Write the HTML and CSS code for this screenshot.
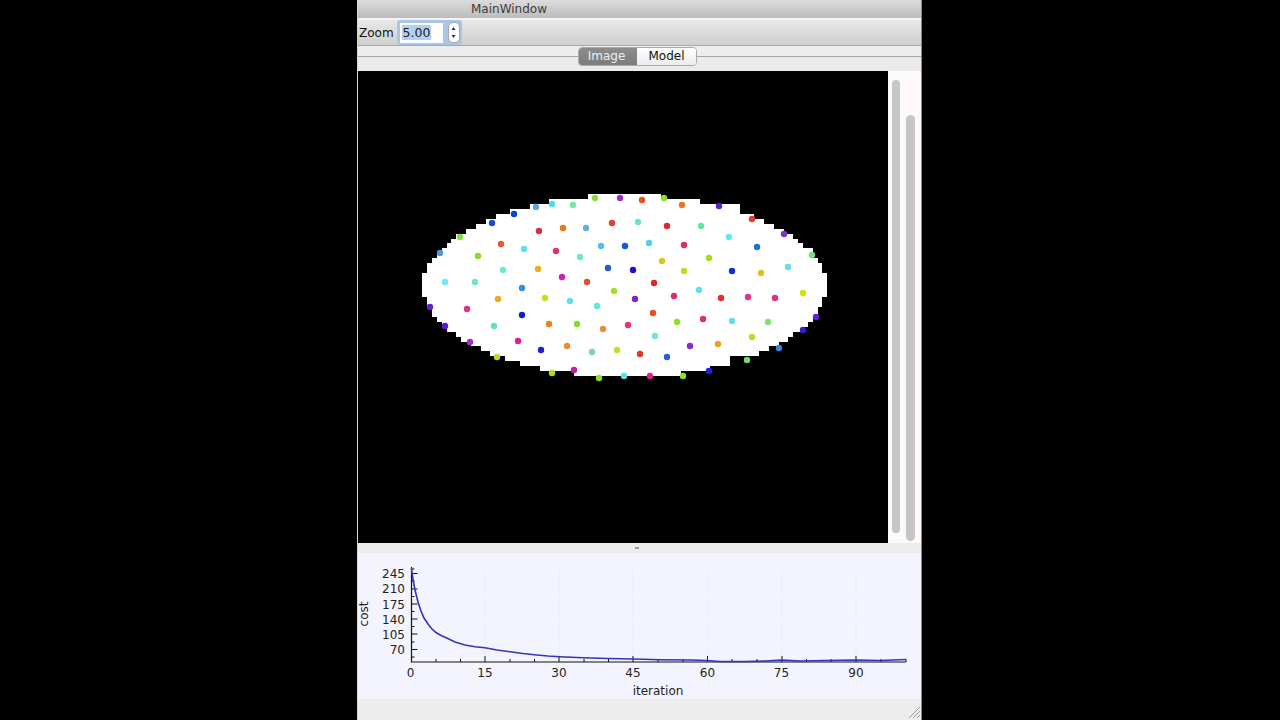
FILE: index.html
```html
<!DOCTYPE html>
<html lang="en">
<head>
<meta charset="utf-8">
<title>MainWindow</title>
<link rel="stylesheet" href="styles.css">
</head>
<body>
<div class="window">
  <div class="titlebar">MainWindow</div>
  <div class="toolbar">
    <span class="zoom-label">Zoom</span>
    <div class="spin">
      <div class="spin-input"><span class="spin-value">5.00</span></div>
      <div class="stepper">
        <svg width="7" height="15" viewBox="0 0 7 15"><path d="M3.5 2 5.500 5h-4zM3.500 13 1.500 10h4z" fill="#333"/></svg>
      </div>
    </div>
  </div>
  <div class="tabstrip">
    <div class="segments">
      <div class="seg seg-on">Image</div>
      <div class="seg">Model</div>
    </div>
  </div>
  <div class="pane">
    <div class="view">
      <svg class="image" viewBox="358 71 530 472" width="530" height="472">
        <rect x="358" y="71" width="530" height="472" fill="#000"/>
        <polygon fill="#fff" points="588,194 661,194 661,199 700,199 700,204 740,204 740,214 754,214 754,219 764,219 764,224 774,224 774,229 784,229 784,234 793,234 793,239 798,239 798,243 803,243 803,248 813,248 813,258 818,258 818,263 822,263 822,273 827,273 827,297 822,297 822,307 818,307 818,317 813,317 813,322 808,322 808,327 803,327 803,332 793,332 793,337 788,337 788,342 779,342 779,346 769,346 769,351 759,351 759,356 730,356 730,366 710,366 710,371 681,371 681,376 574,376 574,371 540,371 540,366 520,366 520,361 505,361 505,356 490,356 490,351 481,351 481,346 471,346 471,342 461,342 461,337 456,337 456,332 447,332 447,327 442,327 442,322 437,322 437,317 432,317 432,307 427,307 427,297 422,297 422,273 427,273 427,263 432,263 432,258 437,258 437,253 442,253 442,248 447,248 447,243 451,243 451,239 456,239 456,234 466,234 466,229 476,229 476,224 486,224 486,219 496,219 496,214 510,214 510,209 530,209 530,204 549,204 549,199 588,199"/>
        <g class="dots">
          <circle cx="595" cy="198" r="3.2" fill="#8ade3c"/><circle cx="620" cy="198" r="3.2" fill="#9a2fd0"/><circle cx="536" cy="207" r="3.2" fill="#5aa8d8"/><circle cx="552" cy="204" r="3.2" fill="#55d8e8"/><circle cx="573" cy="205" r="3.2" fill="#70e8b0"/><circle cx="612" cy="223" r="3.2" fill="#e04030"/><circle cx="514" cy="214" r="3.2" fill="#1040d0"/><circle cx="492" cy="223" r="3.2" fill="#1050d0"/><circle cx="539" cy="231" r="3.2" fill="#d03050"/><circle cx="563" cy="228" r="3.2" fill="#e87818"/><circle cx="586" cy="228" r="3.2" fill="#60b0e0"/><circle cx="460" cy="237" r="3.2" fill="#80e040"/><circle cx="501" cy="244" r="3.2" fill="#e85830"/><circle cx="524" cy="249" r="3.2" fill="#60e0e8"/><circle cx="556" cy="251" r="3.2" fill="#e0307a"/><circle cx="601" cy="246" r="3.2" fill="#50c0e0"/><circle cx="625" cy="246" r="3.2" fill="#1858d0"/><circle cx="440" cy="253" r="3.2" fill="#5098d0"/><circle cx="478" cy="256" r="3.2" fill="#90d830"/><circle cx="580" cy="257" r="3.2" fill="#70e8c8"/><circle cx="608" cy="268" r="3.2" fill="#1860d0"/><circle cx="503" cy="270" r="3.2" fill="#70e8d0"/><circle cx="538" cy="269" r="3.2" fill="#e8b020"/><circle cx="562" cy="277" r="3.2" fill="#d020a8"/><circle cx="445" cy="282" r="3.2" fill="#70e8f0"/><circle cx="475" cy="282" r="3.2" fill="#70e8c0"/><circle cx="587" cy="282" r="3.2" fill="#e05030"/>
          <circle cx="642" cy="200" r="3.2" fill="#e85020"/><circle cx="664" cy="198" r="3.2" fill="#90e020"/><circle cx="682" cy="205" r="3.2" fill="#e87828"/><circle cx="719" cy="206" r="3.2" fill="#6020d0"/><circle cx="638" cy="222" r="3.2" fill="#60e8d0"/><circle cx="667" cy="226" r="3.2" fill="#e02830"/><circle cx="701" cy="226" r="3.2" fill="#60e8a0"/><circle cx="752" cy="219" r="3.2" fill="#e04028"/><circle cx="729" cy="237" r="3.2" fill="#60e8f0"/><circle cx="784" cy="234" r="3.2" fill="#8030d0"/><circle cx="649" cy="243" r="3.2" fill="#50d0e8"/><circle cx="684" cy="245" r="3.2" fill="#d83060"/><circle cx="757" cy="247" r="3.2" fill="#2070d8"/><circle cx="812" cy="255" r="3.2" fill="#70e080"/><circle cx="709" cy="258" r="3.2" fill="#a0e010"/><circle cx="662" cy="261" r="3.2" fill="#d8c818"/><circle cx="788" cy="267" r="3.2" fill="#60e0e8"/><circle cx="633" cy="270" r="3.2" fill="#2010d0"/><circle cx="684" cy="271" r="3.2" fill="#b8e020"/><circle cx="732" cy="271" r="3.2" fill="#1030d0"/><circle cx="761" cy="273" r="3.2" fill="#e0c020"/><circle cx="654" cy="283" r="3.2" fill="#e02820"/>
          <circle cx="522" cy="288" r="3.2" fill="#3090e0"/><circle cx="614" cy="291" r="3.2" fill="#a0e030"/><circle cx="545" cy="298" r="3.2" fill="#c0e020"/><circle cx="498" cy="299" r="3.2" fill="#e8b020"/><circle cx="570" cy="301" r="3.2" fill="#60e0e0"/><circle cx="597" cy="306" r="3.2" fill="#60e8e0"/><circle cx="430" cy="307" r="3.2" fill="#6020d8"/><circle cx="467" cy="309" r="3.2" fill="#e03090"/><circle cx="522" cy="315" r="3.2" fill="#1020d0"/><circle cx="445" cy="326" r="3.2" fill="#6018d0"/><circle cx="494" cy="326" r="3.2" fill="#60e0c0"/><circle cx="549" cy="324" r="3.2" fill="#e88020"/><circle cx="577" cy="324" r="3.2" fill="#80e020"/><circle cx="603" cy="329" r="3.2" fill="#e89030"/><circle cx="470" cy="342" r="3.2" fill="#a030c0"/><circle cx="518" cy="341" r="3.2" fill="#d82090"/><circle cx="541" cy="350" r="3.2" fill="#2020d0"/><circle cx="567" cy="346" r="3.2" fill="#e89030"/><circle cx="592" cy="352" r="3.2" fill="#80d8a0"/><circle cx="617" cy="350" r="3.2" fill="#b8e030"/><circle cx="497" cy="357" r="3.2" fill="#c0d820"/><circle cx="552" cy="373" r="3.2" fill="#b0e020"/><circle cx="574" cy="370" r="3.2" fill="#c020a0"/><circle cx="599" cy="378" r="3.2" fill="#90e020"/><circle cx="624" cy="376" r="3.2" fill="#60e0e0"/>
          <circle cx="699" cy="290" r="3.2" fill="#60e0e8"/><circle cx="803" cy="293" r="3.2" fill="#d0e010"/><circle cx="674" cy="296" r="3.2" fill="#e03060"/><circle cx="721" cy="298" r="3.2" fill="#e03020"/><circle cx="748" cy="297" r="3.2" fill="#e03090"/><circle cx="775" cy="298" r="3.2" fill="#e03080"/><circle cx="635" cy="299" r="3.2" fill="#8020d0"/><circle cx="653" cy="313" r="3.2" fill="#e05020"/><circle cx="628" cy="325" r="3.2" fill="#e83080"/><circle cx="677" cy="322" r="3.2" fill="#90e020"/><circle cx="703" cy="319" r="3.2" fill="#d83070"/><circle cx="732" cy="321" r="3.2" fill="#60e0e8"/><circle cx="768" cy="322" r="3.2" fill="#80e080"/><circle cx="816" cy="317" r="3.2" fill="#6020d0"/><circle cx="803" cy="330" r="3.2" fill="#3020d0"/><circle cx="655" cy="336" r="3.2" fill="#70e0e0"/><circle cx="752" cy="337" r="3.2" fill="#b0e030"/><circle cx="690" cy="346" r="3.2" fill="#8030d0"/><circle cx="718" cy="344" r="3.2" fill="#f0a020"/><circle cx="779" cy="348" r="3.2" fill="#4080e0"/><circle cx="640" cy="354" r="3.2" fill="#e03830"/><circle cx="667" cy="357" r="3.2" fill="#2060d0"/><circle cx="747" cy="360" r="3.2" fill="#70e060"/><circle cx="709" cy="371" r="3.2" fill="#2020e0"/><circle cx="650" cy="376" r="3.2" fill="#e02090"/><circle cx="683" cy="376" r="3.2" fill="#90e030"/>
        </g>
      </svg>
      <div class="scroll scroll-a"><div class="thumb thumb-a"></div></div>
      <div class="scroll scroll-b"><div class="thumb thumb-b"></div></div>
    </div>
  </div>
  <div class="splitter"><span class="handle"></span></div>
  <svg class="plot" viewBox="358 553 563 146" width="563" height="146">
    <g class="grid">
      <path d="M485 570V660M559 570V660M633 570V660M707.5 570V660M782 570V660M856 570V660"/>
    </g>
    <path class="axis" d="M411.500 567V662H906"/>
    <path class="tick" d="M411.500 573.500h6M411.500 589h6M411.500 604h6M411.500 619h6M411.500 634h6M411.500 649.500h6M411.500 581h3M411.500 596.500h3M411.500 611.500h3M411.500 626.500h3M411.500 642h3M411.500 657h3M411.500 569h3"/>
    <path class="tick" d="M485 662v-6M559 662v-6M633 662v-6M707.500 662v-6M782 662v-6M856 662v-6M906 662v-3M436 662v-3M460.500 662v-3M510 662v-3M534.500 662v-3M584 662v-3M608.500 662v-3M658 662v-3M683 662v-3M732 662v-3M757 662v-3M806.500 662v-3M831 662v-3M881 662v-3"/>
    <polyline class="curve" points="411.500,568 412,573 413.500,582 415,590 418,602 421,611 424,618 428,624 432,629 436,632.500 441,635.500 446.700,638 455,642 465,645 475,646.700 485,647.700 497,650 510,651.700 523,653.500 536.700,655 548,656 560,656.700 583,657.700 608,658.500 633,659 660,659.700 690,660 707,660.500 720,661.500 745,661.500 765,661 782,660 800,661 825,660.500 856,660 880,660.500 906,659.500"/>
    <g class="ylabels">
      <text x="405" y="578">245</text>
      <text x="405" y="593">210</text>
      <text x="405" y="608.500">175</text>
      <text x="405" y="623.500">140</text>
      <text x="405" y="639">105</text>
      <text x="405" y="654">70</text>
    </g>
    <g class="xlabels">
      <text x="410.500" y="677">0</text>
      <text x="485" y="677">15</text>
      <text x="559" y="677">30</text>
      <text x="633" y="677">45</text>
      <text x="707.500" y="677">60</text>
      <text x="781.500" y="677">75</text>
      <text x="856" y="677">90</text>
    </g>
    <text class="xtitle" x="658" y="695">iteration</text>
    <text class="ytitle" transform="translate(368 614) rotate(-90)">cost</text>
  </svg>
  <div class="status">
    <svg class="grip" width="13" height="13" viewBox="0 0 13 13"><path d="M1 12 12 1M5 12l7-7M9 12l3-3" stroke="#9a9a9a" fill="none"/></svg>
  </div>
</div>
</body>
</html>
```

FILE: styles.css
```css
* { box-sizing: border-box; }
html, body { margin: 0; height: 100%; }
body {
  background: #000;
  padding-left: 357px;
  overflow: hidden;
  font-family: "DejaVu Sans", "Liberation Sans", sans-serif;
}
.window {
  width: 565px;
  height: 720px;
  display: flex;
  flex-direction: column;
  background: #ececec;
  border-left: 1px solid #d8d8d8;
  border-right: 1px solid #8a8a8a;
}
.titlebar {
  height: 20px;
  flex: none;
  padding: 2px 0 0 113px;
  font-size: 12px;
  line-height: 15px;
  color: #3c3c3c;
  background: linear-gradient(#dcdcdc, #bcbcbc);
  border-bottom: 2px solid #8f8f8f;
  border-image: linear-gradient(#8f8f8f 50%, #f4f4f4 50%) 1;
}
.toolbar {
  height: 26px;
  flex: none;
  display: flex;
  align-items: center;
  gap: 3px;
  padding-left: 1px;
  background: linear-gradient(#e8e8e8, #cfcfcf);
  border-bottom: 1px solid #a8a8a8;
}
.zoom-label { font-size: 12px; color: #111; }
.spin {
  width: 65px;
  height: 25px;
  display: flex;
  align-items: center;
  gap: 5px;
  padding: 0 2px 0 3px;
  border-radius: 3px;
  background: #a9c6e4;
}
.spin-input {
  width: 43px;
  height: 20px;
  background: #fff;
  padding: 2px 2px;
  font-size: 12.5px;
  line-height: 16px;
  color: #222;
}
.spin-value { background: #b3d0f2; padding: 0 1px; }
.stepper {
  width: 12px;
  height: 21px;
  background: #fff;
  border: 1px solid #a8a8a8;
  border-radius: 5px;
  display: flex;
  align-items: center;
  justify-content: center;
}
.tabstrip {
  height: 10px;
  flex: none;
  display: flex;
  background: #ededed;
  padding: 1px 0 0 220px;
}
.segments {
  position: relative;
  z-index: 1;
  display: flex;
  width: 119px;
  height: 19px;
  border-radius: 4px;
  overflow: hidden;
  border: 1px solid #aaa;
  background: #fff;
  font-size: 12px;
  line-height: 17px;
  text-align: center;
}
.seg { flex: 1; color: #111; background: linear-gradient(#fff, #ececec); }
.seg-on {
  flex: none;
  width: 58px;
  padding-right: 3px;
  color: #eee;
  background: linear-gradient(#8c8c8c, #7c7c7c);
}
.pane {
  flex: none;
  height: 487px;
  padding-top: 14px;
  background: #ebebeb;
  border-top: 1px solid #a6a6a6;
}
.view { display: flex; height: 472px; }
.image { display: block; flex: none; }
.dots { filter: blur(0.35px); }
.scroll { background: #fbfbfb; position: relative; height: 472px; }
.scroll-a { width: 15px; }
.scroll-b { width: 18px; background: #fff8fb; }
.thumb { position: absolute; background: #c6c6c6; border-radius: 5px; }
.thumb-a { left: 4px; width: 8px; top: 9px; bottom: 10px; }
.thumb-b { left: 3px; width: 9px; top: 44px; bottom: 2px; }
.splitter {
  height: 10px;
  flex: none;
  background: #ededed;
  display: flex;
  justify-content: center;
  padding: 4px 5px 0 0;
}
.handle { width: 4px; height: 2px; background: #999; }
.plot { display: block; flex: none; background: #f4f4fe; }
.grid path { stroke: #dcdcea; stroke-dasharray: 1 2; fill: none; }
.axis { stroke: #111; stroke-width: 1.2; fill: none; }
.tick { stroke: #111; stroke-width: 1; fill: none; }
.curve { stroke: #3434bc; stroke-width: 1.6; fill: none; }
.ylabels text, .xlabels text, .xtitle, .ytitle {
  font-family: "DejaVu Sans", sans-serif;
  font-size: 12px;
  fill: #222;
}
.ylabels text { text-anchor: end; }
.xlabels text, .xtitle, .ytitle { text-anchor: middle; }
.status {
  flex: 1;
  background: #ededed;
  display: flex;
  justify-content: flex-end;
  align-items: flex-end;
}
.grip { display: block; margin-bottom: 1px; }
```
